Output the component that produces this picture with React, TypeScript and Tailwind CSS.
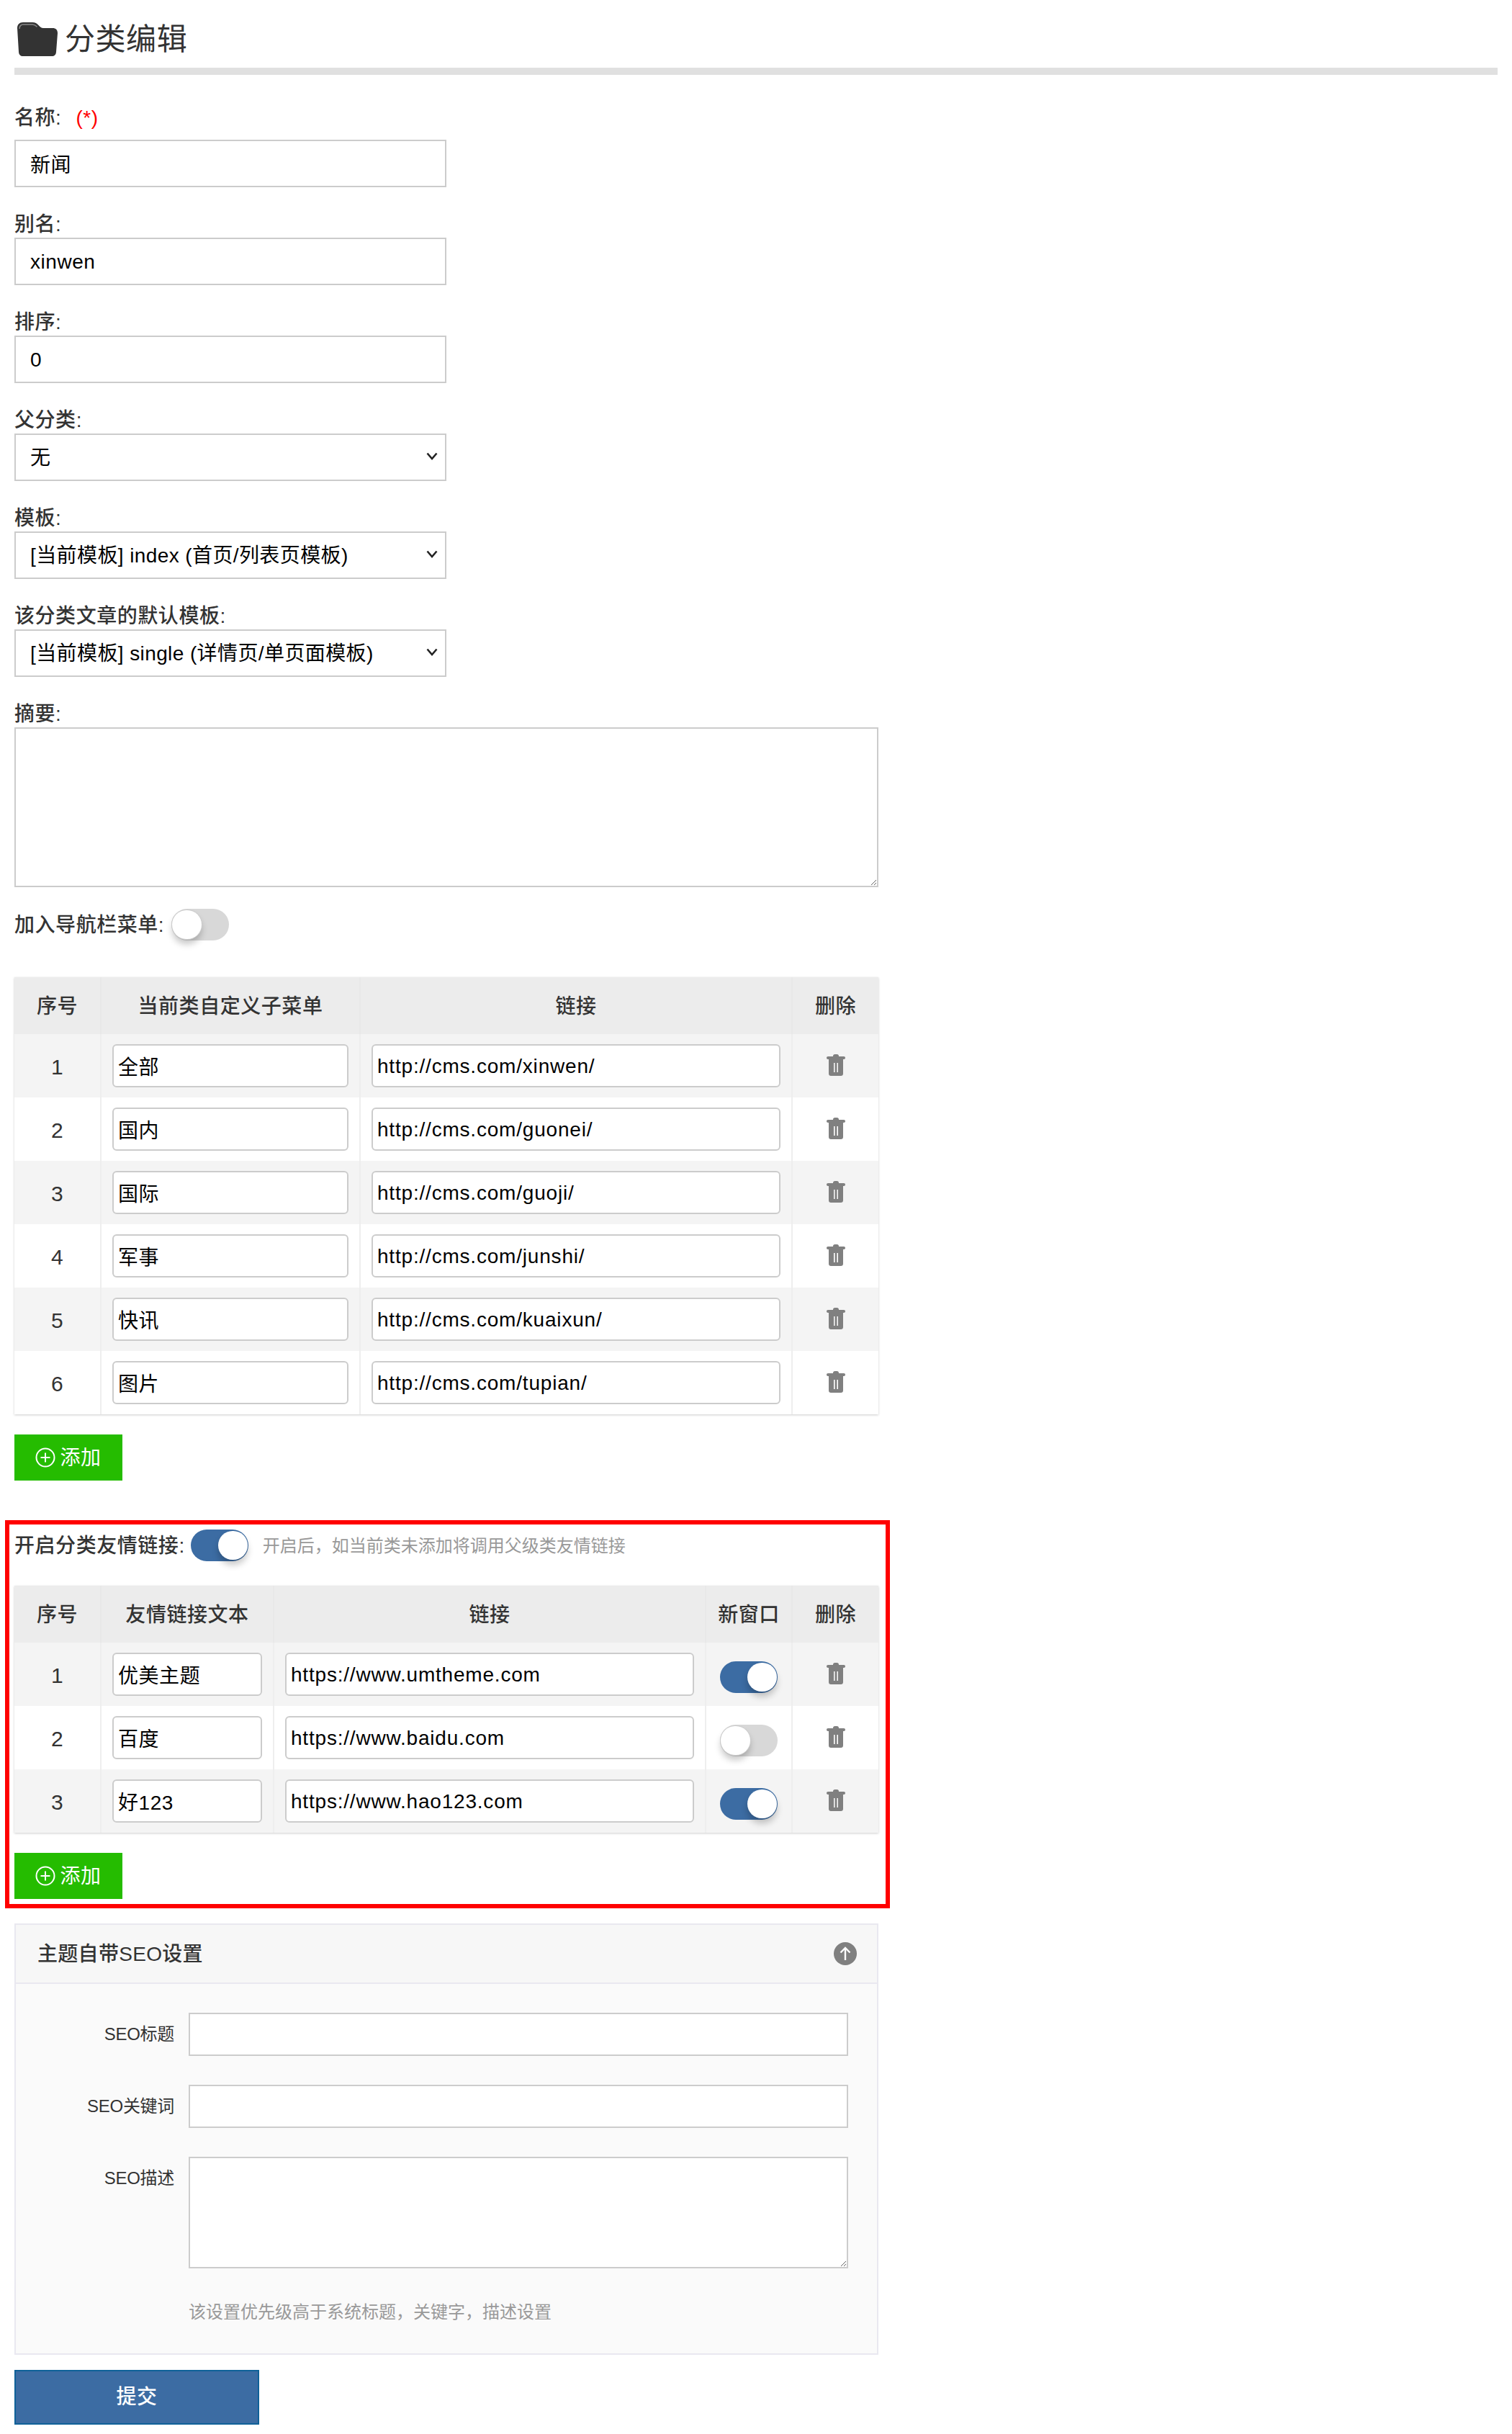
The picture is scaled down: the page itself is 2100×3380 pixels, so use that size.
import React from 'react';

function Trash() {
  return (
    <svg width="26" height="30" viewBox="0 0 26 30" className="mx-auto block" fill="#808080">
      <path d="M9 2.500C9 1 10 0 11.500 0h3C16 0 17 1 17 2.500V3h7c1.200 0 2 .8 2 2s-.8 2-2 2H2C.8 7 0 6.200 0 5s.8-2 2-2h7z" />
      <path fillRule="evenodd" d="M3 6.500h20V27c0 1.800-1.200 3-3 3H6c-1.800 0-3-1.200-3-3V6.500zm7 5.500v13h1.600V12H10zm4.400 0v13H16V12h-1.600z" />
    </svg>
  );
}

function Toggle({ on }: { on: boolean }) {
  return (
    <span className={`relative inline-block h-[44px] w-[80px] shrink-0 rounded-full align-middle ${on ? 'bg-[#3c6ca3]' : 'bg-[#d8d8d8]'}`}>
      <span className={`absolute top-[2px] h-[40px] w-[41px] rounded-full bg-white shadow-[0_7px_10px_rgba(0,0,0,0.22)] ${on ? 'right-[1px]' : 'left-[1px] ring-1 ring-[#cccccc]'}`} />
    </span>
  );
}

function AddButton() {
  return (
    <button type="button" className="flex h-[64px] w-[150px] items-center justify-center gap-[6px] bg-[#25bc00] text-[28px] text-white">
      <svg width="28" height="28" viewBox="0 0 28 28" fill="none" stroke="white" strokeWidth="2">
        <circle cx="14" cy="14" r="12.500" />
        <path d="M14 7.500v13M7.500 14h13" />
      </svg>
      <span className="pt-[2px]">添加</span>
    </button>
  );
}

function CellInput({ value, latin }: { value: string; latin?: boolean }) {
  return (
    <input
      readOnly
      value={value}
      className={`block h-[60px] w-full rounded-[6px] border-2 border-[#cccccc] bg-white px-[6px] text-[28px] text-black outline-none ${latin ? 'pt-[2px] tracking-[0.8px]' : 'pt-0'}`}
    />
  );
}

function Field({ label, first, children }: { label: React.ReactNode; first?: boolean; children: React.ReactNode }) {
  return (
    <div className="mb-[30px]">
      <label className={`block h-[40px] text-[28px] font-medium leading-[44px] text-[#333333] ${first ? 'mb-[12px]' : ''}`}>{label}</label>
      {children}
    </div>
  );
}

const textBox = 'block h-[66px] w-[600px] border-2 border-[#cccccc] bg-white px-[20px] pt-[2px] text-[28px] text-black outline-none';

function SelectBox({ value }: { value: string }) {
  return (
    <div className="relative w-[600px]">
      <select className={`${textBox} appearance-none tracking-[0.4px]`} defaultValue={value}>
        <option>{value}</option>
      </select>
      <svg width="16" height="11" viewBox="0 0 16 11" className="pointer-events-none absolute right-[12px] top-[26px]" fill="none" stroke="#222222" strokeWidth="2.600">
        <path d="M1.500 1.500 8 9l6.500-7.500" />
      </svg>
    </div>
  );
}

const menus = [
  ['全部', 'http://cms.com/xinwen/'],
  ['国内', 'http://cms.com/guonei/'],
  ['国际', 'http://cms.com/guoji/'],
  ['军事', 'http://cms.com/junshi/'],
  ['快讯', 'http://cms.com/kuaixun/'],
  ['图片', 'http://cms.com/tupian/'],
];

const links: [string, string, boolean][] = [
  ['优美主题', 'https://www.umtheme.com', true],
  ['百度', 'https://www.baidu.com', false],
  ['好123', 'https://www.hao123.com', true],
];

const th = 'h-[79px] border-r-2 border-[#e8e8e8] bg-[#ececec] p-0 pt-[2px] text-center text-[28px] font-medium text-[#333333] last:border-r-0';
const td = 'h-[88px] border-r-2 border-[#eeeeee] px-[15px] py-0 text-center text-[28px] text-[#333333] last:border-r-0';
const numTd = 'h-[88px] border-r-2 border-[#eeeeee] px-[15px] pt-[2px] text-center text-[30px] text-[#333333]';
const toggleTd = 'h-[88px] border-r-2 border-[#eeeeee] px-[15px] pt-[8px] text-center';
const trashTd = 'h-[88px] px-[15px] pb-[2px]';
const rowCls = 'odd:bg-[#f4f4f4] even:bg-white';

export default function App() {
  return (
    <div className="min-h-[3380px] w-[2100px] bg-white px-[20px] tracking-[0.55px] text-[#333333] [font-family:'Liberation_Sans','Noto_Sans_CJK_SC',sans-serif]">
      <h1 className="flex h-[94px] items-center gap-[10px] pl-[4px] pt-[16px] text-[42px] font-normal leading-none text-[#333333]">
        <svg width="56" height="47" viewBox="0 0 56 47" fill="#333333" className="-mt-[2px]">
          <path d="M0 8C0 3 3 0 8 0h13c4 0 6 1.500 8.500 4 2 2 3.500 4 7 4H49c4.500 0 7 2.500 7 7l-2 26c-.3 4-2.500 6-6 6H8c-3.500 0-5.700-2-6-6L0 8z" />
          <path d="M3 9c0-3.500 2-6 5.500-6H21c3 0 4.500 1.200 6.500 3.300" fill="none" stroke="#8a8a8a" strokeWidth="1.400" />
        </svg>
        分类编辑
      </h1>
      <div className="mb-[38px] h-[10px] w-[2060px] bg-[#e0e0e0]" />

      <Field first label={<>名称:<span className="ml-[20px] font-normal text-[#ff0000]">(*)</span></>}>
        <input readOnly value="新闻" className={`${textBox} pb-[2px]`} />
      </Field>
      <Field label="别名:">
        <input readOnly value="xinwen" className={textBox} />
      </Field>
      <Field label="排序:">
        <input readOnly value="0" className={textBox} />
      </Field>
      <Field label="父分类:">
        <SelectBox value="无" />
      </Field>
      <Field label="模板:">
        <SelectBox value="[当前模板] index (首页/列表页模板)" />
      </Field>
      <Field label="该分类文章的默认模板:">
        <SelectBox value="[当前模板] single (详情页/单页面模板)" />
      </Field>
      <Field label="摘要:">
        <textarea readOnly className="block h-[222px] w-[1200px] border-2 border-[#cccccc] bg-white outline-none" />
      </Field>

      <div className="mb-[51px] flex h-[44px] items-center gap-[10px] text-[28px] font-medium text-[#333333]">
        <span className="pt-[2px]">加入导航栏菜单:</span>
        <Toggle on={false} />
      </div>

      <div className="w-[1200px] shadow-[0_1px_3px_rgba(0,0,0,0.2)]">
        <table className="w-[1200px] table-fixed border-collapse">
          <colgroup>
            <col className="w-[120px]" />
            <col className="w-[360px]" />
            <col className="w-[600px]" />
            <col className="w-[120px]" />
          </colgroup>
          <thead>
            <tr>
              <th className={th}>序号</th>
              <th className={th}>当前类自定义子菜单</th>
              <th className={th}>链接</th>
              <th className={th}>删除</th>
            </tr>
          </thead>
          <tbody>
            {menus.map(([name, url], i) => (
              <tr key={url} className={rowCls}>
                <td className={numTd}>{i + 1}</td>
                <td className={td}><CellInput value={name} /></td>
                <td className={td}><CellInput value={url} latin /></td>
                <td className={trashTd}><Trash /></td>
              </tr>
            ))}
          </tbody>
        </table>
      </div>

      <div className="mt-[28px]">
        <AddButton />
      </div>

      <div className="-ml-[13px] mt-[55px] w-[1229px] border-[6px] border-[#ff0000] px-[7px] pb-[7px] pt-[7px]">
        <div className="mb-[34px] flex h-[44px] items-center text-[28px] text-[#333333]">
          <span className="pt-[2px] font-medium">开启分类友情链接:</span>
          <span className="ml-[8px]"><Toggle on /></span>
          <span className="ml-[20px] pt-[2px] text-[24px] tracking-normal text-[#999999]">开启后，如当前类未添加将调用父级类友情链接</span>
        </div>

        <div className="w-[1200px] shadow-[0_1px_3px_rgba(0,0,0,0.2)]">
          <table className="w-[1200px] table-fixed border-collapse">
            <colgroup>
              <col className="w-[120px]" />
              <col className="w-[240px]" />
              <col className="w-[600px]" />
              <col className="w-[120px]" />
              <col className="w-[120px]" />
            </colgroup>
            <thead>
              <tr>
                <th className={th}>序号</th>
                <th className={th}>友情链接文本</th>
                <th className={th}>链接</th>
                <th className={th}>新窗口</th>
                <th className={th}>删除</th>
              </tr>
            </thead>
            <tbody>
              {links.map(([name, url, on], i) => (
                <tr key={url} className={rowCls}>
                  <td className={numTd}>{i + 1}</td>
                  <td className={td}><CellInput value={name} /></td>
                  <td className={td}><CellInput value={url} latin /></td>
                  <td className={toggleTd}><Toggle on={on} /></td>
                  <td className={trashTd}><Trash /></td>
                </tr>
              ))}
            </tbody>
          </table>
        </div>

        <div className="mt-[28px]">
          <AddButton />
        </div>
      </div>

      <div className="mt-[21px] w-[1200px] border-2 border-[#e9e8f0] bg-[#fafafa]">
        <div className="flex h-[82px] items-center justify-between border-b-2 border-[#e9e8f0] bg-[#f7f7f7] pl-[30px] pr-[28px]">
          <span className="pt-[2px] text-[28px] font-medium tracking-[0.3px] text-[#333333]">主题自带SEO设置</span>
          <svg width="32" height="32" viewBox="0 0 32 32">
            <circle cx="16" cy="16" r="16" fill="#808080" />
            <path d="M16 25V8M9.500 14.500 16 8l6.500 6.500" fill="none" stroke="white" strokeWidth="2.400" />
          </svg>
        </div>
        <div className="flex flex-col gap-[40px] pl-[240px] pt-[40px] tracking-normal">
          <div className="relative">
            <span className="absolute -left-[242px] top-0 w-[222px] text-right text-[24px] leading-[60px] tracking-[-0.3px] text-[#333333]">SEO标题</span>
            <input readOnly className="block h-[60px] w-[916px] border-2 border-[#cccccc] bg-white outline-none" />
          </div>
          <div className="relative">
            <span className="absolute -left-[242px] top-0 w-[222px] text-right text-[24px] leading-[60px] tracking-[-0.3px] text-[#333333]">SEO关键词</span>
            <input readOnly className="block h-[60px] w-[916px] border-2 border-[#cccccc] bg-white outline-none" />
          </div>
          <div className="relative">
            <span className="absolute -left-[242px] top-0 w-[222px] text-right text-[24px] leading-[60px] tracking-[-0.3px] text-[#333333]">SEO描述</span>
            <textarea readOnly className="block h-[155px] w-[916px] border-2 border-[#cccccc] bg-white outline-none" />
          </div>
        </div>
        <p className="h-[118px] pl-[240px] pt-[44px] text-[24px] leading-[34px] tracking-normal text-[#999999]">该设置优先级高于系统标题，关键字，描述设置</p>
      </div>

      <button type="button" className="mt-[21px] block h-[76px] w-[340px] border-2 border-[#0f6198] bg-[#3c6ca3] text-[28px] font-medium text-white">提交</button>
    </div>
  );
}
